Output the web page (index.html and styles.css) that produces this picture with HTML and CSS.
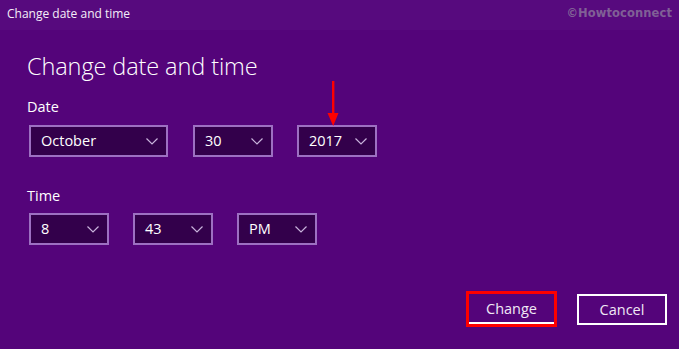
FILE: index.html
```html
<!DOCTYPE html>
<html>
<head>
<meta charset="utf-8">
<link rel="stylesheet" href="styles.css">
</head>
<body>
<div class="window">
  <div class="titlebar">
    <span class="title">Change date and time</span>
    <span class="watermark">©Howtoconnect</span>
  </div>
  <div class="content">
    <h1 class="heading">Change date and time</h1>
    <div class="label label-date">Date</div>
    <div class="row">
      <div class="select w-month"><span>October</span><svg class="chev" viewBox="0 0 12 7"><path d="M0.5 0.5 L6 6 L11.5 0.5" /></svg></div>
      <div class="select w-small"><span>30</span><svg class="chev" viewBox="0 0 12 7"><path d="M0.5 0.5 L6 6 L11.5 0.5" /></svg></div>
      <div class="select w-small year"><span>2017</span><svg class="chev" viewBox="0 0 12 7"><path d="M0.5 0.5 L6 6 L11.5 0.5" /></svg>
        <svg class="arrow" viewBox="0 0 12 46"><rect x="5" y="0" width="2.4" height="34" fill="#ff0000"/><polygon points="0.5,32 11.5,32 6.2,45" fill="#ff0000"/></svg>
      </div>
    </div>
    <div class="label label-time">Time</div>
    <div class="row">
      <div class="select w-small"><span>8</span><svg class="chev" viewBox="0 0 12 7"><path d="M0.5 0.5 L6 6 L11.5 0.5" /></svg></div>
      <div class="select w-small"><span>43</span><svg class="chev" viewBox="0 0 12 7"><path d="M0.5 0.5 L6 6 L11.5 0.5" /></svg></div>
      <div class="select w-small"><span>PM</span><svg class="chev" viewBox="0 0 12 7"><path d="M0.5 0.5 L6 6 L11.5 0.5" /></svg></div>
    </div>
    <div class="buttons">
      <div class="highlight"><div class="btn btn-change">Change</div></div>
      <div class="btn btn-cancel">Cancel</div>
    </div>
  </div>
</div>
</body>
</html>
```
FILE: styles.css
```css
html, body {
  margin: 0;
  padding: 0;
}
body {
  width: 679px;
  height: 349px;
  background: #54047a;
  font-family: "Open Sans", "Noto Sans", sans-serif;
  color: #ffffff;
  overflow: hidden;
}
.window {
  width: 679px;
  height: 349px;
}
.titlebar {
  height: 30px;
  background: #570a7e;
  display: flex;
  align-items: center;
  justify-content: space-between;
  padding: 0 7px 0 7px;
  box-sizing: border-box;
}
.title {
  font-size: 12px;
  color: #f4eef8;
  margin-top: -4px;
}
.watermark {
  font-family: "DejaVu Sans", sans-serif;
  font-weight: bold;
  font-size: 11.5px;
  color: #806096;
  margin-top: -5px;
  letter-spacing: 0.1px;
}
.content {
  padding: 0 12px 0 27px;
}
.heading {
  margin: 20px 0 0 0;
  font-size: 23.5px;
  font-weight: 300;
  line-height: 32px;
  letter-spacing: -0.1px;
}
.label {
  font-size: 14.5px;
  line-height: 20px;
}
.label-date {
  margin-top: 15px;
  margin-bottom: 8px;
}
.label-time {
  margin-top: 29px;
  margin-bottom: 7px;
}
.row {
  display: flex;
  gap: 24px;
  padding-left: 2px;
}
.select {
  position: relative;
  height: 32px;
  box-sizing: border-box;
  border: 2px solid #9d70c2;
  background: #33004b;
  display: flex;
  align-items: center;
  justify-content: space-between;
  padding: 0 8px 0 10px;
  font-size: 14.5px;
}
.select span {
  margin-top: -1px;
}
.w-month {
  width: 139px;
  margin-right: 1px;
}
.w-small {
  width: 80px;
}
.chev {
  width: 12px;
  height: 7px;
  fill: none;
  stroke: #c9b3dc;
  stroke-width: 1.2;
}
.arrow {
  position: absolute;
  left: 28px;
  top: -46px;
  width: 12px;
  height: 46px;
}
.buttons {
  display: flex;
  justify-content: flex-end;
  align-items: center;
  gap: 20px;
  margin-top: 46px;
}
.highlight {
  border: 3px solid #ff0000;
  width: 85px;
  height: 30px;
  display: flex;
}
.btn {
  box-sizing: border-box;
  display: flex;
  align-items: center;
  justify-content: center;
  font-size: 14.5px;
  color: #f0e8f5;
}
.btn-change {
  width: 85px;
  height: 30px;
  border-bottom: 2px solid #ffffff;
  padding-top: 1px;
}
.btn-cancel {
  width: 90px;
  height: 31px;
  border: 2px solid #ffffff;
}
```
